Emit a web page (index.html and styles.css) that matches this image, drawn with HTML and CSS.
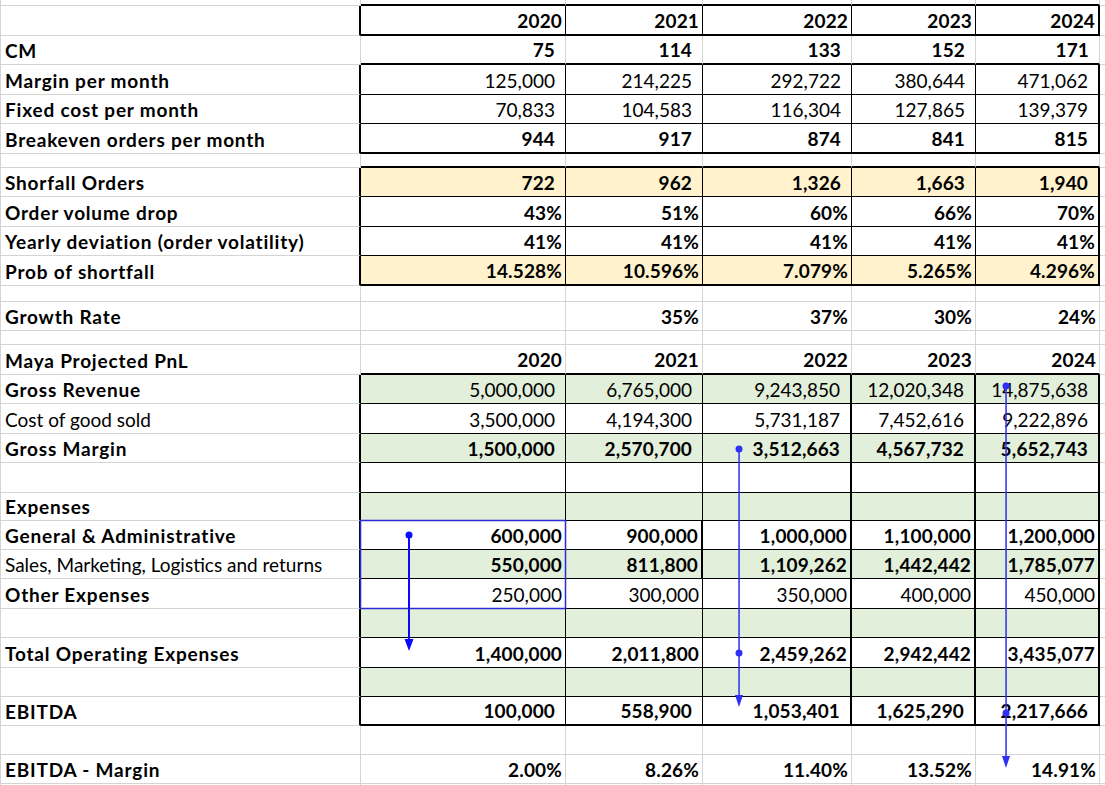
FILE: index.html
```html
<!DOCTYPE html>
<html lang="en">
<head>
<meta charset="utf-8">
<title>Maya Projected PnL</title>
<link rel="stylesheet" href="styles.css">
</head>
<body>
<div class="page">
  <div class="sheet">
    <div class="row h6 pre"><div class="c l"></div><div class="c d"></div><div class="c d"></div><div class="c d"></div><div class="c d"></div><div class="c d"></div><div class="c x"></div></div>

    <div class="row h30 box end"><div class="c l"></div><div class="c d b p">2020</div><div class="c d b p">2021</div><div class="c d b p">2022</div><div class="c d b p">2023</div><div class="c d b p">2024</div><div class="c x"></div></div>
    <div class="row h29 pre"><div class="c l b">CM</div><div class="c d b">75</div><div class="c d b">114</div><div class="c d b">133</div><div class="c d b">152</div><div class="c d b">171</div><div class="c x"></div></div>
    <div class="row h30 box"><div class="c l b">Margin per month</div><div class="c d">125,000</div><div class="c d">214,225</div><div class="c d">292,722</div><div class="c d">380,644</div><div class="c d">471,062</div><div class="c x"></div></div>
    <div class="row h29 box"><div class="c l b">Fixed cost per month</div><div class="c d">70,833</div><div class="c d">104,583</div><div class="c d">116,304</div><div class="c d">127,865</div><div class="c d">139,379</div><div class="c x"></div></div>
    <div class="row h30 box end"><div class="c l b">Breakeven orders per month</div><div class="c d b">944</div><div class="c d b">917</div><div class="c d b">874</div><div class="c d b">841</div><div class="c d b">815</div><div class="c x"></div></div>
    <div class="row h14 pre"><div class="c l"></div><div class="c d"></div><div class="c d"></div><div class="c d"></div><div class="c d"></div><div class="c d"></div><div class="c x"></div></div>

    <div class="row h29 box yellow"><div class="c l b">Shorfall Orders</div><div class="c d b">722</div><div class="c d b">962</div><div class="c d b">1,326</div><div class="c d b">1,663</div><div class="c d b">1,940</div><div class="c x"></div></div>
    <div class="row h30 box"><div class="c l b">Order volume drop</div><div class="c d b p">43%</div><div class="c d b p">51%</div><div class="c d b p">60%</div><div class="c d b p">66%</div><div class="c d b p">70%</div><div class="c x"></div></div>
    <div class="row h29 box"><div class="c l b">Yearly deviation (order volatility)</div><div class="c d b p">41%</div><div class="c d b p">41%</div><div class="c d b p">41%</div><div class="c d b p">41%</div><div class="c d b p">41%</div><div class="c x"></div></div>
    <div class="row h30 box end yellow"><div class="c l b">Prob of shortfall</div><div class="c d b p">14.528%</div><div class="c d b p">10.596%</div><div class="c d b p">7.079%</div><div class="c d b p">5.265%</div><div class="c d b p">4.296%</div><div class="c x"></div></div>
    <div class="row h16"><div class="c l"></div><div class="c d"></div><div class="c d"></div><div class="c d"></div><div class="c d"></div><div class="c d"></div><div class="c x"></div></div>

    <div class="row h29"><div class="c l b">Growth Rate</div><div class="c d"></div><div class="c d b p">35%</div><div class="c d b p">37%</div><div class="c d b p">30%</div><div class="c d b p">24%</div><div class="c x"></div></div>
    <div class="row h14"><div class="c l"></div><div class="c d"></div><div class="c d"></div><div class="c d"></div><div class="c d"></div><div class="c d"></div><div class="c x"></div></div>

    <div class="row h30 pre"><div class="c l b">Maya Projected PnL</div><div class="c d b p">2020</div><div class="c d b p">2021</div><div class="c d b p">2022</div><div class="c d b p">2023</div><div class="c d b p">2024</div><div class="c x"></div></div>
    <div class="row h29 box pnl green"><div class="c l b">Gross Revenue</div><div class="c d">5,000,000</div><div class="c d">6,765,000</div><div class="c d">9,243,850</div><div class="c d">12,020,348</div><div class="c d">14,875,638</div><div class="c x"></div></div>
    <div class="row h30 box pnl"><div class="c l">Cost of good sold</div><div class="c d">3,500,000</div><div class="c d">4,194,300</div><div class="c d">5,731,187</div><div class="c d">7,452,616</div><div class="c d">9,222,896</div><div class="c x"></div></div>
    <div class="row h29 box pnl green"><div class="c l b">Gross Margin</div><div class="c d b">1,500,000</div><div class="c d b">2,570,700</div><div class="c d b">3,512,663</div><div class="c d b">4,567,732</div><div class="c d b">5,652,743</div><div class="c x"></div></div>
    <div class="row h30 box pnl"><div class="c l"></div><div class="c d"></div><div class="c d"></div><div class="c d"></div><div class="c d"></div><div class="c d"></div><div class="c x"></div></div>
    <div class="row h28 box pnl green"><div class="c l b">Expenses</div><div class="c d"></div><div class="c d"></div><div class="c d"></div><div class="c d"></div><div class="c d"></div><div class="c x"></div></div>
    <div class="row h29 box pnl wide"><div class="c l b">General &amp; Administrative</div><div class="c d b p">600,000</div><div class="c d b p">900,000</div><div class="c d b p">1,000,000</div><div class="c d b p">1,100,000</div><div class="c d b p">1,200,000</div><div class="c x"></div></div>
    <div class="row h29 box pnl wide green"><div class="c l">Sales, Marketing, Logistics and returns</div><div class="c d b p">550,000</div><div class="c d b p">811,800</div><div class="c d b p">1,109,262</div><div class="c d b p">1,442,442</div><div class="c d b p">1,785,077</div><div class="c x"></div></div>
    <div class="row h30 box pnl"><div class="c l b">Other Expenses</div><div class="c d p">250,000</div><div class="c d p">300,000</div><div class="c d p">350,000</div><div class="c d p">400,000</div><div class="c d p">450,000</div><div class="c x"></div></div>
    <div class="row h29 box pnl green"><div class="c l"></div><div class="c d"></div><div class="c d"></div><div class="c d"></div><div class="c d"></div><div class="c d"></div><div class="c x"></div></div>
    <div class="row h30 box pnl"><div class="c l b">Total Operating Expenses</div><div class="c d b p">1,400,000</div><div class="c d b p">2,011,800</div><div class="c d b p">2,459,262</div><div class="c d b p">2,942,442</div><div class="c d b p">3,435,077</div><div class="c x"></div></div>
    <div class="row h29 box pnl green"><div class="c l"></div><div class="c d"></div><div class="c d"></div><div class="c d"></div><div class="c d"></div><div class="c d"></div><div class="c x"></div></div>
    <div class="row h29 box pnl end"><div class="c l b">EBITDA</div><div class="c d b">100,000</div><div class="c d b">558,900</div><div class="c d b">1,053,401</div><div class="c d b">1,625,290</div><div class="c d b">2,217,666</div><div class="c x"></div></div>
    <div class="row h29"><div class="c l"></div><div class="c d"></div><div class="c d"></div><div class="c d"></div><div class="c d"></div><div class="c d"></div><div class="c x"></div></div>
    <div class="row h29"><div class="c l b">EBITDA - Margin</div><div class="c d b p">2.00%</div><div class="c d b p">8.26%</div><div class="c d b p">11.40%</div><div class="c d b p">13.52%</div><div class="c d b p">14.91%</div><div class="c x"></div></div>
    <div class="row rest"><div class="c l"></div><div class="c d"></div><div class="c d"></div><div class="c d"></div><div class="c d"></div><div class="c d"></div><div class="c x"></div></div>
  </div>

  <svg class="trace" width="1105" height="785" viewBox="0 0 1105 785" aria-hidden="true">
    <rect x="360.5" y="520.5" width="205" height="88" fill="none" stroke="#2a2ad6" stroke-width="1.5"/>
    <g fill="#0a0aff" stroke="none">
      <rect x="408" y="535" width="2" height="106"/>
      <circle cx="409" cy="535" r="3.5"/>
      <polygon points="404.5,639 413.5,639 409,651"/>
    </g>
    <g fill="#2f2ff5" stroke="none">
      <rect x="738.3" y="449" width="1.5" height="248"/>
      <circle cx="739" cy="449" r="3.5"/>
      <circle cx="739" cy="653" r="3.5"/>
      <polygon points="735,695 743,695 739,707"/>

      <rect x="1005.3" y="386" width="1.5" height="372"/>
      <circle cx="1006" cy="386" r="3.5"/>
      <circle cx="1006" cy="713" r="3.5"/>
      <polygon points="1002,756 1010,756 1006,768"/>
    </g>
  </svg>
</div>
</body>
</html>
```
FILE: styles.css
```css
:root {
  --grid: #d4d4d4;
  --ink: #000000;
  --green: #e2efda;
  --yellow: #fff2cc;
}

* { box-sizing: border-box; }

html, body {
  margin: 0;
  padding: 0;
  background: #ffffff;
}

body {
  font-family: Lato, "Open Sans", "Liberation Sans", sans-serif;
  font-size: 19px;
  color: var(--ink);
}

.page {
  position: relative;
  width: 1105px;
  height: 785px;
  overflow: hidden;
}

.sheet {
  display: flex;
  flex-direction: column;
  width: 1105px;
  border-left: 1px solid var(--grid);
}

.row {
  display: grid;
  grid-template-columns: 360px 205px 137px 149px 124px 124px 1fr;
  height: 30px;
}

.h6 { height: 6px; }
.h14 { height: 14px; }
.h16 { height: 16px; }
.h28 { height: 28px; }
.h29 { height: 29px; }
.h30 { height: 30px; }
.rest { height: 3px; }

.c {
  display: flex;
  align-items: flex-end;
  justify-content: flex-end;
  white-space: nowrap;
  line-height: 22px;
  padding: 0 10px 2px 0;
  border-right: 1px solid var(--grid);
  border-bottom: 1px solid var(--grid);
  overflow: visible;
}

.c.l {
  justify-content: flex-start;
  padding-left: 4px;
  padding-right: 0;
}

.c.p { padding-right: 3px; }
.c.x { border-right: none; padding: 0; }
.b { font-weight: 700; }
.c.l.b { letter-spacing: 0.8px; }
.c.d.b { letter-spacing: 0.15px; }

/* boxed ranges */
.box .c.l { border-right: 2px solid var(--ink); }
.box .c.d {
  border-right: 1px solid var(--ink);
  border-bottom: 1px solid var(--ink);
}
.box .c.d:nth-child(6) { border-right-width: 2px; }
.end .c.d { border-bottom: 2px solid var(--ink); }
.pre .c.d { border-bottom: 2px solid var(--ink); }

.pnl .c.d:nth-child(4),
.pnl .c.d:nth-child(5) { border-right-width: 2px; }
.wide .c.d:nth-child(3) { border-right-width: 2px; }

.green .c.d { background: var(--green); }
.yellow .c.d { background: var(--yellow); }

.trace {
  position: absolute;
  left: 0;
  top: 0;
  pointer-events: none;
}
```
